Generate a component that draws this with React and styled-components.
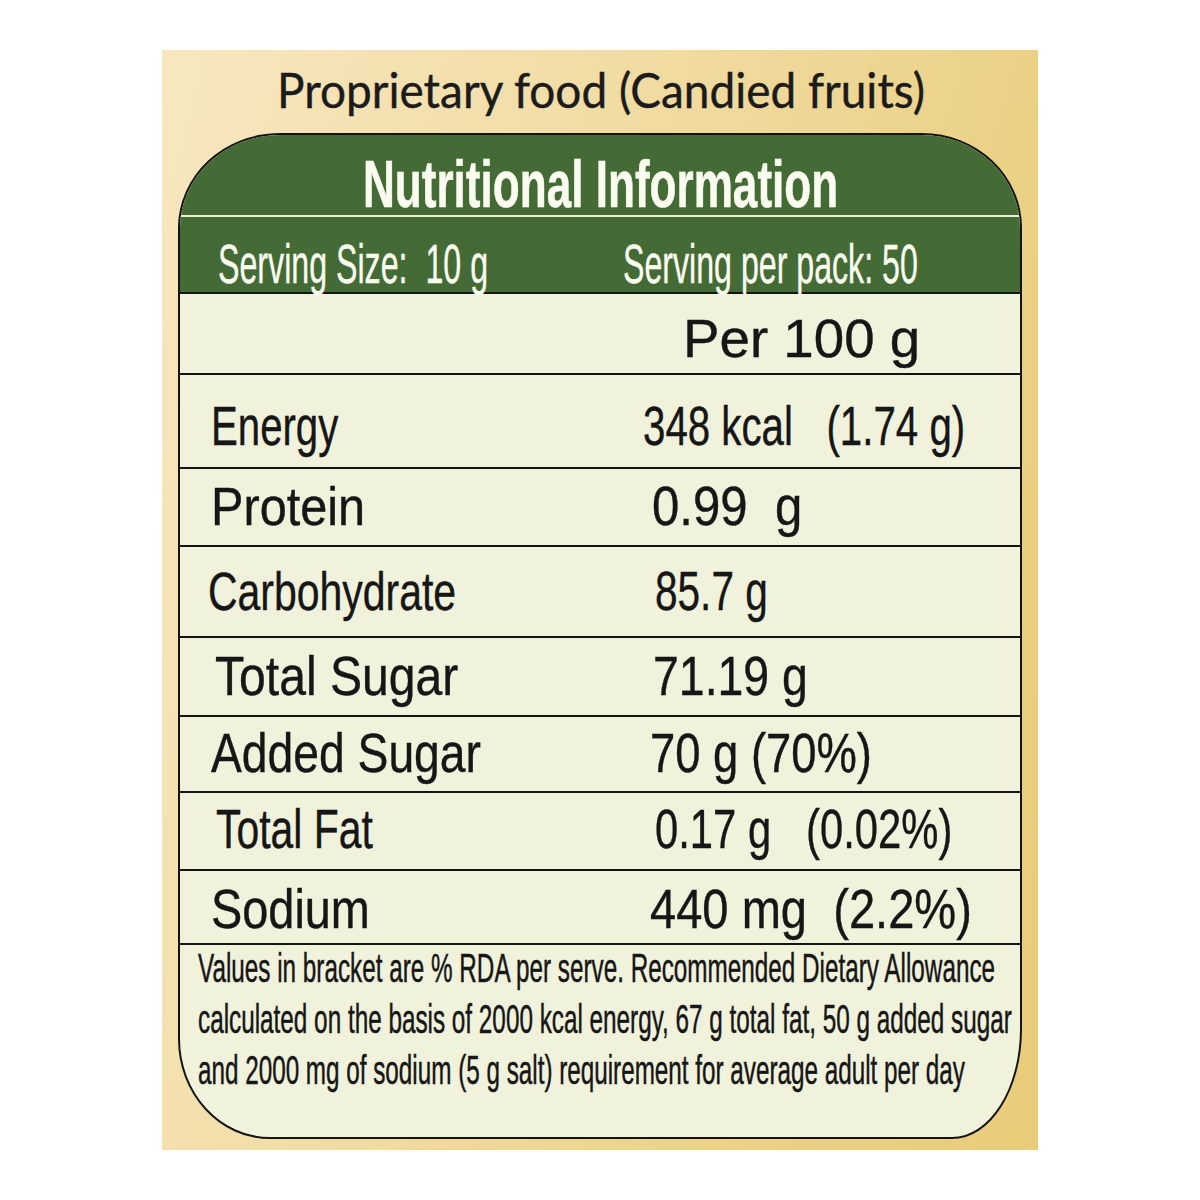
import React, { useLayoutEffect, useRef, useState } from 'react';
import styled, { createGlobalStyle } from 'styled-components';

const GlobalStyle = createGlobalStyle`
  html, body {
    margin: 0;
    padding: 0;
    background: #ffffff;
  }
  body {
    font-family: "Liberation Sans", Arial, sans-serif;
    color: #161616;
  }
`;

const Page = styled.div`
  width: 1200px;
  height: 1200px;
  display: flex;
  align-items: center;
  justify-content: center;
`;

const Panel = styled.div`
  width: 876px;
  height: 1100px;
  box-sizing: border-box;
  padding: 15px 16px 11px;
  display: flex;
  flex-direction: column;
  background: linear-gradient(105deg, #f7e7c0 0%, #f1dca4 40%, #ebd186 75%, #e8cc7a 100%);
`;

const Heading = styled.div`
  height: 49px;
  padding-left: 99px;
  font-family: Lato, "Open Sans", sans-serif;
  font-size: 49px;
  line-height: 49px;
  color: #1b1b1b;
  white-space: nowrap;
  -webkit-text-stroke: 0.4px #1b1b1b;
`;

const Board = styled.div`
  margin-top: 19px;
  flex: 1;
  display: flex;
  flex-direction: column;
  border: 2px solid #141414;
  border-radius: 102px 100px 70px 92px / 95px 95px 110px 100px;
  background: #f1f2dc;
  overflow: hidden;
`;

const TitleBand = styled.div`
  height: 80px;
  box-sizing: border-box;
  padding: 16px 0 0 183px;
  background: #446b36;
  color: #fbfcf0;
  font-weight: 700;
  font-size: 66px;
  line-height: 66px;
  white-space: nowrap;
  -webkit-text-stroke: 0.6px #fbfcf0;
`;

const Rule = styled.div`
  height: 2px;
  background: #eef0d6;
`;

const ServingBand = styled.div`
  height: 75px;
  box-sizing: border-box;
  padding-top: 19px;
  display: flex;
  background: #446b36;
  color: #fbfcf0;
  font-size: 56px;
  line-height: 56px;
  white-space: nowrap;
  -webkit-text-stroke: 0.4px #fbfcf0;
`;

const ServingCell = styled.div`
  flex: none;
  box-sizing: border-box;
  width: ${(p) => p.$w}px;
  padding-left: ${(p) => p.$pl}px;
`;

const Row = styled.div`
  height: ${(p) => p.$h}px;
  box-sizing: border-box;
  padding-top: ${(p) => p.$pad}px;
  display: flex;
  align-items: baseline;
  border-top: 2px solid #141414;
  font-size: 56px;
  line-height: 56px;
  white-space: nowrap;
  -webkit-text-stroke: 0.4px #161616;
`;

const Name = styled.div`
  flex: none;
  box-sizing: border-box;
  width: ${(p) => p.$vx - 180}px;
  padding-left: ${(p) => p.$lx - 180}px;
  font-size: ${(p) => p.$fs}px;
  line-height: ${(p) => p.$fs}px;
`;

const Amount = styled.div`
  flex: none;
  font-size: ${(p) => p.$fs}px;
  line-height: ${(p) => p.$fs}px;
`;

const Note = styled.div`
  flex: 1;
  border-top: 2px solid #141414;
  padding-left: 18px;
  font-size: 41px;
  line-height: 51px;
  -webkit-text-stroke: 0.5px #161616;
`;

const NoteLine = styled.div`
  height: 51px;
  white-space: nowrap;
  &:first-child {
    margin-top: -2px;
  }
`;

const Squeeze = styled.span`
  display: inline-block;
  white-space: pre;
  transform-origin: left center;
`;

// squeezes a text horizontally to the width it has on the label
function Fit({ w, children }) {
  const ref = useRef(null);
  const [scale, setScale] = useState(1);

  useLayoutEffect(() => {
    const natural = ref.current.offsetWidth;
    if (natural) setScale(w / natural);
  }, [w, children]);

  return (
    <Squeeze ref={ref} style={{ transform: `scaleX(${scale})` }}>
      {children}
    </Squeeze>
  );
}

const rows = [
  { name: 'Energy', nameW: 127, lx: 211, value: '348 kcal   (1.74 g)', valueW: 322, vx: 643, h: 94, pad: 23 },
  { name: 'Protein', nameW: 154, lx: 211, fs: 54, value: '0.99  g', valueW: 150, vx: 652, h: 78, pad: 9 },
  { name: 'Carbohydrate', nameW: 248, lx: 208, fs: 54, value: '85.7 g', valueW: 113, vx: 655, h: 91, pad: 16 },
  { name: 'Total Sugar', nameW: 243, lx: 215, value: '71.19 g', valueW: 155, vx: 653, h: 79, pad: 10 },
  { name: 'Added Sugar', nameW: 270, lx: 211, value: '70 g (70%)', valueW: 222, vx: 650, h: 76, pad: 8 },
  { name: 'Total Fat', nameW: 157, lx: 216, value: '0.17 g   (0.02%)', valueW: 297, vx: 655, h: 78, pad: 8 },
  { name: 'Sodium', nameW: 159, lx: 211, value: '440 mg  (2.2%)', valueW: 322, vx: 650, h: 74, pad: 10 },
];

const notes = [
  { text: 'Values in bracket are % RDA per serve. Recommended Dietary Allowance', w: 797 },
  { text: 'calculated on the basis of 2000 kcal energy, 67 g total fat, 50 g added sugar', w: 814 },
  { text: 'and 2000 mg of sodium (5 g salt) requirement for average adult per day', w: 767 },
];

export default function App() {
  return (
    <Page>
      <GlobalStyle />
      <Panel>
        <Heading>
          <Fit w={648}>Proprietary food (Candied fruits)</Fit>
        </Heading>
        <Board>
          <TitleBand>
            <Fit w={475}>Nutritional Information</Fit>
          </TitleBand>
          <Rule />
          <ServingBand>
            <ServingCell $w={443} $pl={38}>
              <Fit w={270}>Serving Size:  10 g</Fit>
            </ServingCell>
            <ServingCell $w={300} $pl={0}>
              <Fit w={295}>Serving per pack: 50</Fit>
            </ServingCell>
          </ServingBand>
          <Row $h={81} $pad={17}>
            <Name $vx={683} $lx={180} $fs={54} />
            <Amount $fs={54}>
              <Fit w={237}>Per 100 g</Fit>
            </Amount>
          </Row>
          {rows.map((r) => (
            <Row key={r.name} $h={r.h} $pad={r.pad}>
              <Name $vx={r.vx} $lx={r.lx} $fs={r.fs || 56}>
                <Fit w={r.nameW}>{r.name}</Fit>
              </Name>
              <Amount $fs={56}>
                <Fit w={r.valueW}>{r.value}</Fit>
              </Amount>
            </Row>
          ))}
          <Note>
            {notes.map((n) => (
              <NoteLine key={n.w}>
                <Fit w={n.w}>{n.text}</Fit>
              </NoteLine>
            ))}
          </Note>
        </Board>
      </Panel>
    </Page>
  );
}
